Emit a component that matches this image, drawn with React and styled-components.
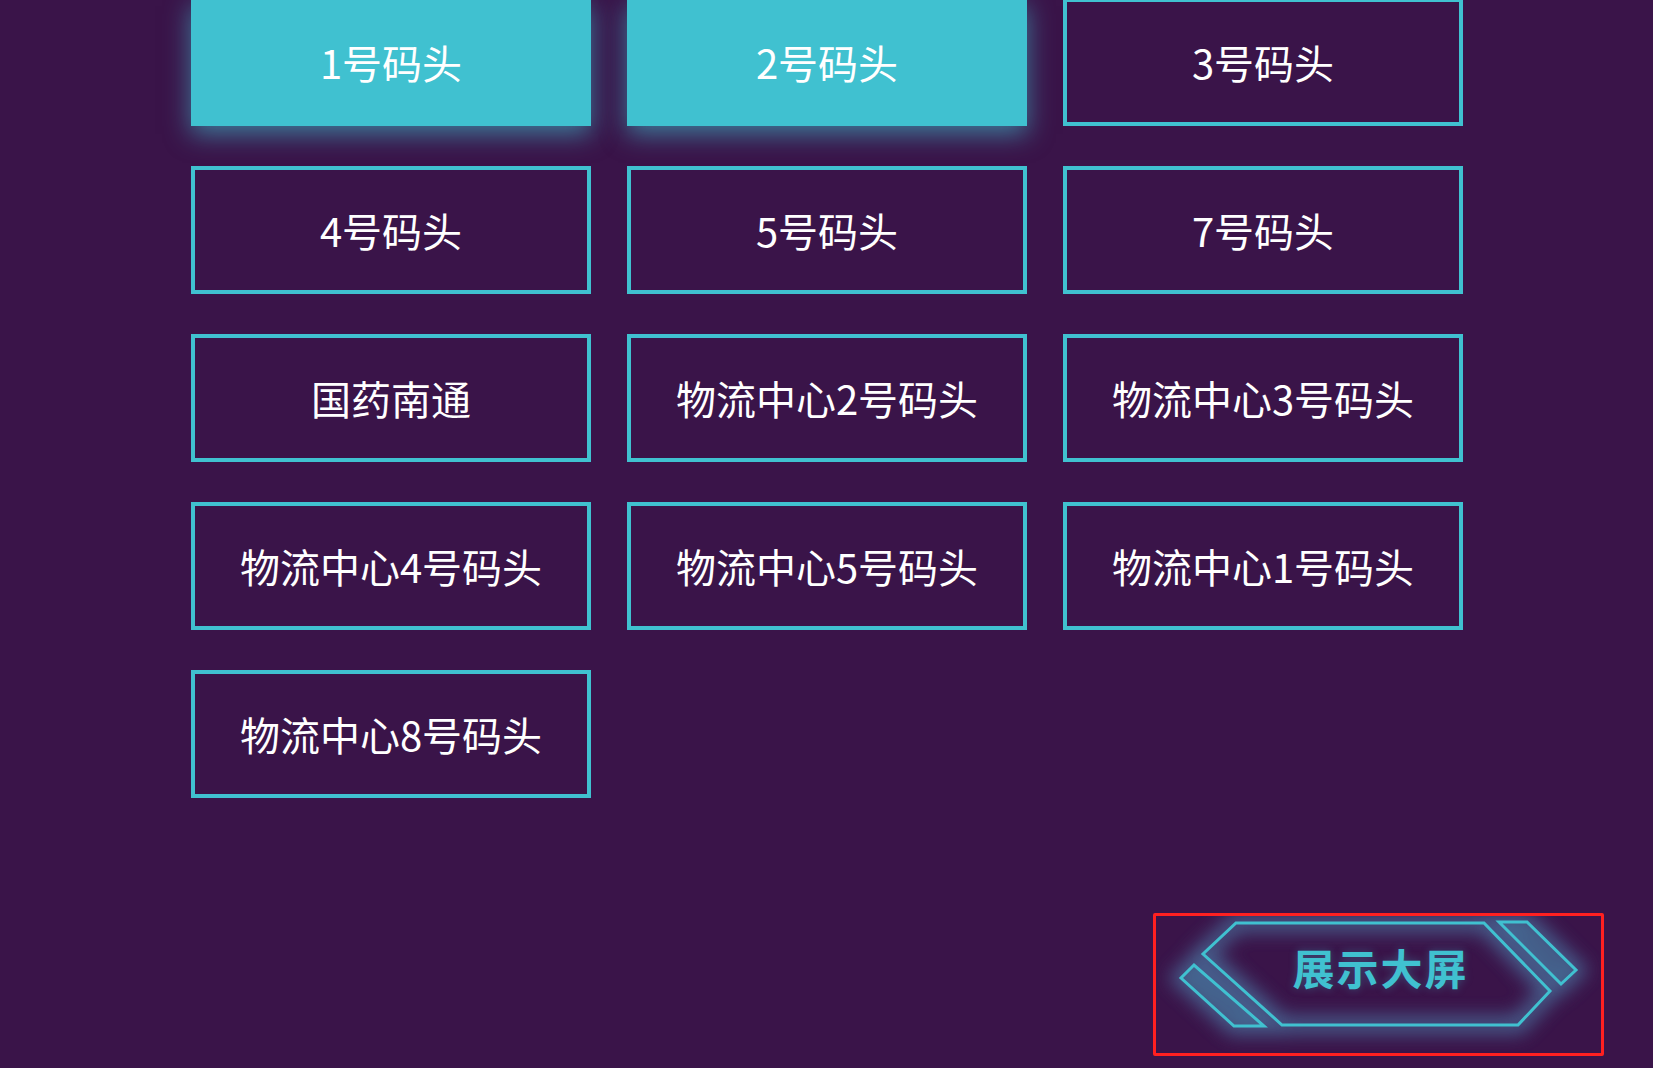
import React from 'react';
import styled, { createGlobalStyle } from 'styled-components';

const CYAN = '#40c1d0';
const BG = '#3a1449';

const GlobalStyle = createGlobalStyle`
  html, body {
    margin: 0;
    padding: 0;
    background: ${BG};
    overflow: hidden;
  }
  body {
    font-family: "Noto Sans CJK SC", "Noto Sans", sans-serif;
  }
`;

const docks = [
  { name: '1号码头', active: true },
  { name: '2号码头', active: true },
  { name: '3号码头' },
  { name: '4号码头' },
  { name: '5号码头' },
  { name: '7号码头' },
  { name: '国药南通' },
  { name: '物流中心2号码头' },
  { name: '物流中心3号码头' },
  { name: '物流中心4号码头' },
  { name: '物流中心5号码头' },
  { name: '物流中心1号码头' },
  { name: '物流中心8号码头' },
];

const Page = styled.div`
  width: 1653px;
  height: 1068px;
  display: flex;
  flex-direction: column;
`;

const DockGrid = styled.div`
  display: grid;
  grid-template-columns: repeat(3, 400px);
  grid-auto-rows: 128px;
  column-gap: 36px;
  row-gap: 40px;
  margin: -2px 0 0 191px;
`;

const DockTile = styled.div`
  box-sizing: border-box;
  display: flex;
  align-items: center;
  justify-content: center;
  border: 4px solid ${CYAN};
  background: ${(p) => (p.$active ? CYAN : 'transparent')};
  box-shadow: ${(p) => (p.$active ? '0 8px 24px rgba(64, 193, 208, 0.6)' : 'none')};
  color: #ffffff;
  font-size: 40px;
  line-height: 1;
  white-space: nowrap;
  cursor: pointer;
`;

const Footer = styled.div`
  display: flex;
  justify-content: flex-end;
  padding-right: 49px;
  margin-top: 115px;
`;

const ScreenButton = styled.div`
  position: relative;
  box-sizing: border-box;
  width: 451px;
  height: 143px;
  border: 3px solid #ff2020;
  border-radius: 2px;
  cursor: pointer;

  svg {
    display: block;
    width: 100%;
    height: 100%;
  }
`;

const ScreenLabel = styled.span`
  position: absolute;
  left: 0;
  right: 0;
  top: 0;
  bottom: 0;
  display: flex;
  align-items: center;
  justify-content: center;
  padding: 0 0 36px 4px;
  color: ${CYAN};
  font-size: 42px;
  font-weight: 700;
  letter-spacing: 2px;
  text-shadow: 0 0 8px rgba(64, 193, 208, 0.35);
`;

const hex = '1236,923 1484,923 1550,991 1518,1025 1282,1025 1203,954';
const leftBar = '1194,965 1181,978 1234,1026 1264,1026';
const rightBar = '1499,922 1527,922 1576,970 1561,984';

const FrameArt = () => (
  <svg viewBox="1156 916 445 137" preserveAspectRatio="none">
    <defs>
      <filter id="glow" x="-20%" y="-40%" width="140%" height="180%">
        <feGaussianBlur stdDeviation="9" />
      </filter>
    </defs>
    <g filter="url(#glow)" fill="none" stroke="#4a6d9a" strokeWidth="18" opacity="0.8">
      <polygon points={hex} />
      <polygon points={leftBar} />
      <polygon points={rightBar} />
    </g>
    <g fill="none" stroke={CYAN} strokeWidth="3" strokeLinejoin="miter">
      <polygon points={hex} />
      <polygon points={leftBar} fill="rgba(64,193,208,0.1)" />
      <polygon points={rightBar} fill="rgba(64,193,208,0.1)" />
    </g>
  </svg>
);

export default function App() {
  return (
    <>
      <GlobalStyle />
      <Page>
        <DockGrid>
          {docks.map((d) => (
            <DockTile key={d.name} $active={d.active}>
              {d.name}
            </DockTile>
          ))}
        </DockGrid>
        <Footer>
          <ScreenButton>
            <FrameArt />
            <ScreenLabel>展示大屏</ScreenLabel>
          </ScreenButton>
        </Footer>
      </Page>
    </>
  );
}
